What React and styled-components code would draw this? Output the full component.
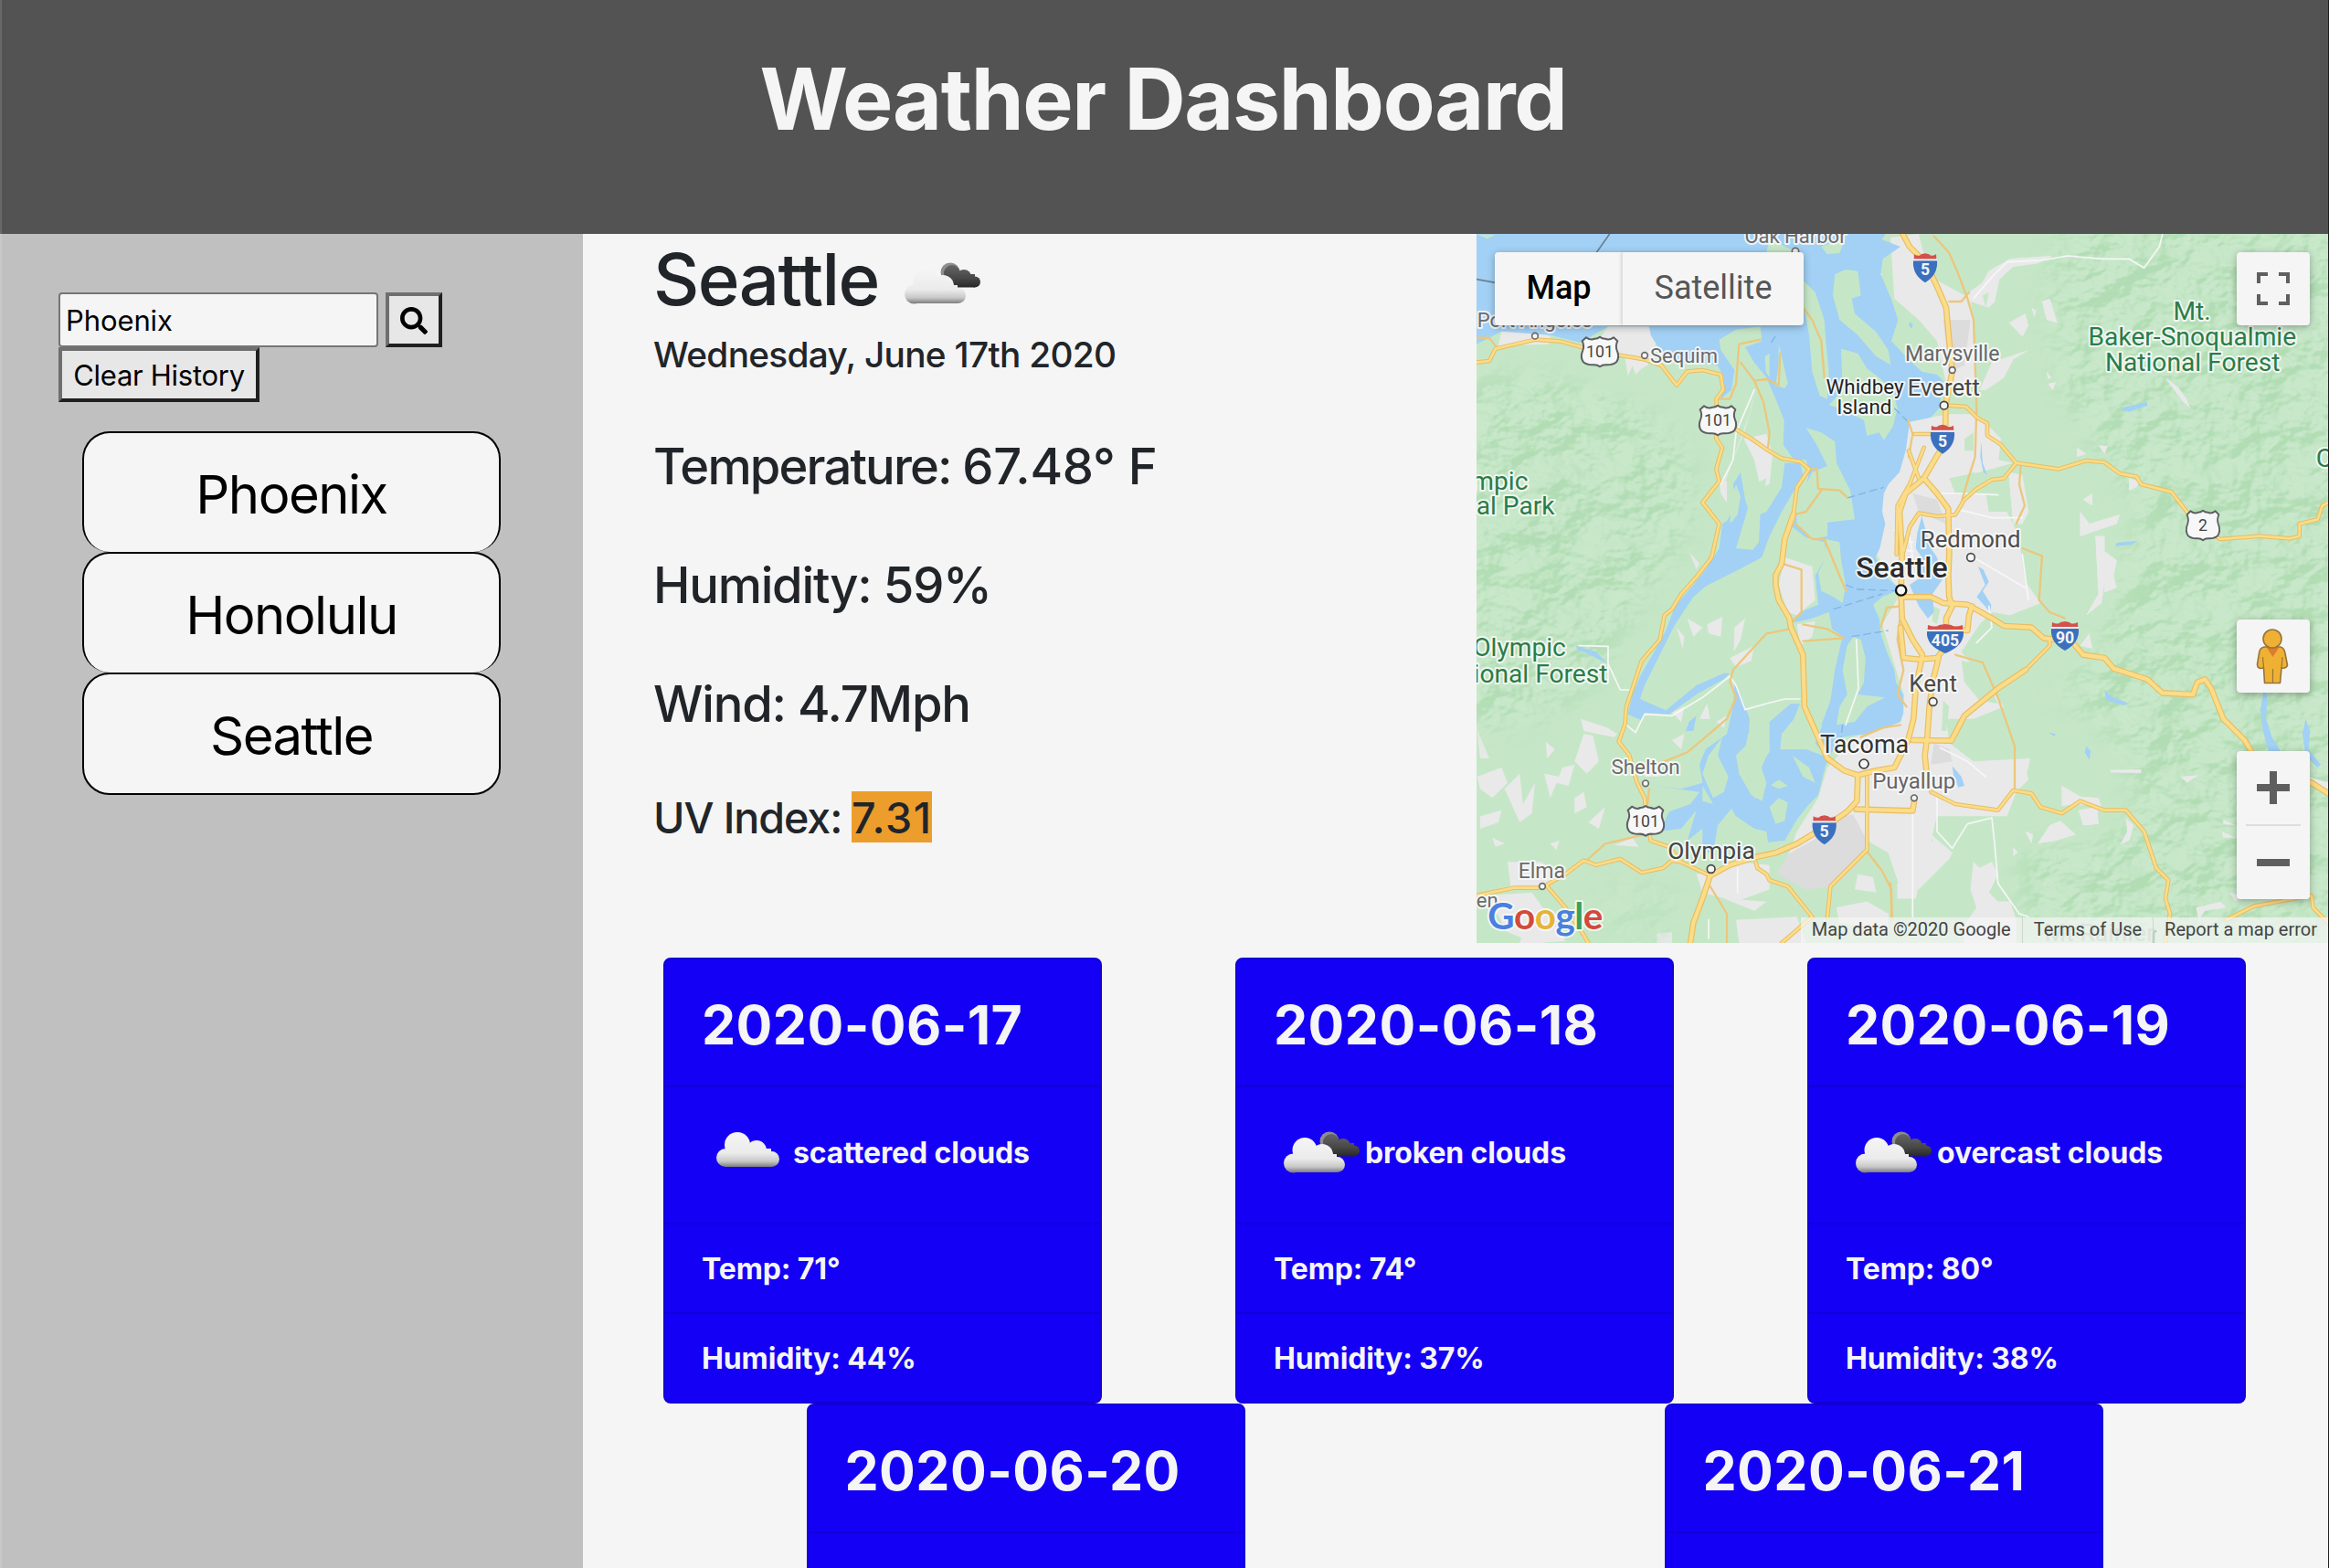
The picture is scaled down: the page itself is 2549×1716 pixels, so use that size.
import React from 'react';
import styled, { createGlobalStyle, css } from 'styled-components';
import { FaSearch } from 'react-icons/fa';

const sans = 'Inter, "Noto Sans", sans-serif';
const roboto = 'Roboto, "Noto Sans", sans-serif';
const paper = '#f5f5f5';

const GlobalStyle = createGlobalStyle`
  *, *::before, *::after { box-sizing: border-box; }
  html, body { margin: 0; }
  body { font-family: ${sans}; background: ${paper}; color: #212529; overflow: hidden; }
  h1, h2, h3, p, ul { margin: 0; padding: 0; font-weight: inherit; }
`;

const Page = styled.div`
  width: 2549px;
  height: 1716px;
  overflow: hidden;
  display: flex;
  flex-direction: column;
  border-right: 1px solid #1d1d1d;
`;

const Header = styled.header`
  height: 256px;
  flex: none;
  padding: 51px 4px 0 0;
  text-align: center;
  background: #535353;
  border-left: 2px solid #686868;
`;

const Title = styled.h1`
  color: ${paper};
  font-size: 93px;
  line-height: 115px;
  font-weight: 700;
  letter-spacing: -0.0143em;
`;

const Body = styled.div`
  flex: 1;
  min-height: 0;
  display: flex;
`;

const Sidebar = styled.aside`
  width: 638px;
  flex: none;
  padding: 64px 62px 0;
  background: #c0c0c0;
  border-left: 2px solid #c8c8c8;
  color: #000;
`;

const SearchRow = styled.div`
  display: flex;
  gap: 8px;
`;

const SearchInput = styled.input`
  width: 350px;
  height: 60px;
  padding: 1px 5px 0 6px;
  border: 2px solid #757575;
  border-radius: 4px;
  background: ${paper};
  color: #000;
  font: 430 31px ${sans};
  letter-spacing: -0.0033em;
  outline: none;
`;

const RaisedButton = styled.button`
  display: flex;
  align-items: center;
  justify-content: center;
  width: ${(p) => p.$width}px;
  height: 60px;
  padding: 1px 0 0;
  border: 4px solid;
  border-color: #6f6f6f #202020 #202020 #6f6f6f;
  background: #e7e7e7;
  color: #000;
  font: 430 31px ${sans};
  letter-spacing: -0.009em;
`;

const History = styled.ul`
  width: 458px;
  margin: 32px 0 0 26px;
  list-style: none;
`;

const HistoryItem = styled.li`
  height: 132px;
  padding-top: 4px;
  border: 2px solid #000;
  border-bottom-width: 0;
  border-radius: 30px;
  background: ${paper};
  text-align: center;
  font-size: 58px;
  font-weight: 440;
  line-height: 127px;
  letter-spacing: -0.026em;
  &:last-child { height: 134px; border-bottom-width: 2px; }
`;

const Main = styled.main`
  flex: 1;
  min-width: 0;
`;

const Current = styled.section`
  display: flex;
  justify-content: space-between;
  height: 776px;
`;

const Readings = styled.div`
  padding: 2px 0 0 77px;
  white-space: nowrap;
  font-weight: 550;
`;

const City = styled.h2`
  display: flex;
  font-size: 78px;
  line-height: 96px;
  font-weight: 550;
  letter-spacing: -0.02em;
  & > svg { margin: 26px 0 0 17px; }
`;

const DateLine = styled.p`
  margin-top: 10px;
  font-size: 38.8px;
  line-height: 48px;
  letter-spacing: -0.018em;
`;

const Reading = styled.p`
  margin-top: ${(p) => (p.$first ? 64 : 62)}px;
  font-size: 54.3px;
  line-height: 68px;
  letter-spacing: ${(p) => (p.$first ? -0.034 : -0.0225)}em;
`;

const Degrees = styled.span`
  letter-spacing: -0.005em;
`;

const UvLine = styled.p`
  display: flex;
  margin-top: 62px;
  height: 56px;
  padding-top: 1px;
  font-size: 46.6px;
  line-height: 56px;
  letter-spacing: -0.023em;
`;

const UvLabel = styled.span`
  width: 202px;
`;

const UvBadge = styled.span`
  width: 88px;
  height: 56px;
  margin: -1px 0 0 15px;
  padding-top: 1px;
  background: #ed9d2b;
  letter-spacing: 0.034em;
`;

const Forecast = styled.section`
  display: flex;
  flex-wrap: wrap;
  justify-content: space-around;
  align-items: flex-start;
  padding: 16px 17px 0 15px;
`;

const Card = styled.article`
  width: 480px;
  height: 488px;
  border: 2px solid #1200d8;
  border-radius: 8px;
  background: #1400f5;
  color: ${paper};
  font-weight: 700;
  font-size: 32px;
  letter-spacing: -0.004em;
`;

const CardRow = styled.div`
  display: flex;
  align-items: center;
  height: ${(p) => p.$height}px;
  padding: 1px 0 0 40px;
  white-space: nowrap;
  border-bottom: 2px solid #1200da;
  &:last-child { border-bottom: 0; }
`;

const CardDate = styled.h3`
  padding-top: 3px;
  font-size: 59px;
  font-weight: 700;
  letter-spacing: 0.0075em;
`;

const Sky = styled.span`
  margin: -6px 0 0 0;
`;

/* ---------- weather icons ---------- */

const CloudSvg = styled.svg`
  width: 100px;
  height: 60px;
  flex: none;
`;

function CloudDefs() {
  return (
    <defs>
      <linearGradient id="cloudFront" gradientUnits="userSpaceOnUse" x1="0" y1="4" x2="0" y2="48">
        <stop offset="0" stopColor="#f8f8f8" />
        <stop offset=".66" stopColor="#ebebeb" />
        <stop offset=".86" stopColor="#c8c8c8" />
        <stop offset="1" stopColor="#7e7e7e" />
      </linearGradient>
      <linearGradient id="cloudBack" gradientUnits="userSpaceOnUse" x1="0" y1="4" x2="0" y2="32">
        <stop offset="0" stopColor="#6a6a6a" />
        <stop offset=".6" stopColor="#474747" />
        <stop offset="1" stopColor="#222" />
      </linearGradient>
      <filter id="cloudSoft" x="-10%" y="-10%" width="120%" height="120%">
        <feGaussianBlur stdDeviation=".7" />
      </filter>
    </defs>
  );
}

function FewClouds() {
  return (
    <CloudSvg viewBox="0 0 100 60">
      <CloudDefs />
      <g transform="translate(5 -6)" fill="url(#cloudFront)" filter="url(#cloudSoft)">
        <circle cx="21" cy="38" r="10" />
        <circle cx="34" cy="24" r="14" />
        <circle cx="55" cy="30" r="11" />
        <circle cx="71.5" cy="39.5" r="8.5" />
        <rect x="21" y="28" width="50" height="20" />
      </g>
    </CloudSvg>
  );
}

function ManyClouds() {
  return (
    <CloudSvg viewBox="0 0 100 60">
      <CloudDefs />
      <g filter="url(#cloudSoft)">
        <circle cx="61" cy="14" r="10.5" fill="#8e8e8e" />
        <g fill="url(#cloudBack)">
          <circle cx="63" cy="15" r="9" />
          <circle cx="76" cy="19" r="8" />
          <circle cx="88" cy="24.5" r="6" />
          <rect x="60" y="16" width="28" height="14.5" />
        </g>
        <g fill="url(#cloudFront)">
          <circle cx="21.5" cy="38" r="10.5" />
          <circle cx="34" cy="23.5" r="13.5" />
          <circle cx="53" cy="29" r="12" />
          <circle cx="69.5" cy="39.5" r="8.5" />
          <rect x="21" y="28" width="48" height="20" />
        </g>
      </g>
    </CloudSvg>
  );
}

/* ---------- map ---------- */

const MapFrame = styled.div`
  position: relative;
  width: 932px;
  height: 776px;
  overflow: hidden;
  font-family: ${roboto};
`;

const MapSvg = styled.svg`
  display: block;
  width: 932px;
  height: 776px;
  font-family: ${roboto};
`;

const controlBox = css`
  position: absolute;
  background: ${paper};
  border-radius: 4px;
  box-shadow: 0 2px 8px rgba(0, 0, 0, 0.3);
`;

const MapTypes = styled.div`
  ${controlBox}
  left: 20px;
  top: 20px;
  display: flex;
  height: 80px;
  font-size: 36px;
  line-height: 79px;
  text-align: center;
`;

const MapType = styled.div`
  width: ${(p) => p.$width}px;
  color: ${(p) => (p.$active ? '#000' : '#565656')};
  font-weight: ${(p) => (p.$active ? 550 : 400)};
  box-shadow: ${(p) => (p.$active ? 'none' : '-2px 0 3px rgba(0,0,0,.12)')};
`;

const Control = styled.div`
  ${controlBox}
  right: 20px;
  top: ${(p) => p.$top}px;
  width: 80px;
  height: ${(p) => p.$height || 80}px;
  & > svg { display: block; }
`;

const Attribution = styled.div`
  position: absolute;
  right: 0;
  bottom: 0;
  display: flex;
  height: 28px;
  font-size: 20px;
  line-height: 27px;
  color: #444;
  white-space: nowrap;
`;

const Credit = styled.span`
  padding: 0 12px;
  background: rgba(245, 245, 245, 0.7);
  border-left: ${(p) => (p.$rule ? '1px solid rgba(200,200,200,.7)' : '0')};
`;

const WATER = '#a2d1f5';
const LAND = '#c6e7c7';
const TOWN = '#e9e9ea';

const seaways = [
  // strait and main sound
  '48,48 1392,48 1378,66 1440,90 1382,130 1375,180 1410,262 1432,330 1410,400 1467,460 1510,500 1560,510 1580,530 1567,620 1540,650 1470,665 1457,760 1437,830 1400,870 1385,900 1380,960 1390,1000 1372,1080 1358,1110 1400,1180 1440,1215 1380,1240 1350,1265 1370,1310 1375,1360 1395,1420 1420,1480 1425,1520 1450,1560 1450,1620 1440,1650 1340,1690 1250,1695 1180,1660 1210,1580 1225,1480 1250,1370 1215,1345 1205,1290 1150,1310 1085,1325 1110,1290 1170,1265 1160,1170 1195,1110 1190,1060 1130,1045 1085,1010 1105,960 1130,880 1140,830 1130,790 1090,790 1055,740 1058,660 1030,590 1000,520 960,470 930,420 985,400 980,352 900,362 845,395 850,430 895,495 885,560 850,590 860,520 840,480 760,470 700,470 650,430 620,380 615,352 480,352 390,405 290,380 130,368 48,410',
  // Hood Canal
  '1110,800 1060,800 1050,880 1000,960 950,980 930,920 915,830 890,870 905,930 870,990 855,1000 845,1080 820,1120 800,1150 760,1200 700,1270 670,1350 620,1440 590,1490 560,1560 545,1625 590,1645 600,1620 680,1625 770,1560 860,1510 880,1490 860,1490 770,1530 670,1612 585,1575 600,1530 640,1450 700,1330 760,1240 800,1205 850,1180 910,1150 985,1110 1010,1040 1050,960 1085,900 1120,840',
  // southern inlets
  '1110,1590 1080,1590 1010,1650 1010,1750 980,1790 1000,1850 985,1910 950,1890 910,1820 900,1760 940,1720 945,1640 915,1560 895,1530 890,1600 870,1690 800,1740 780,1790 790,1850 720,1870 630,1860 780,1880 750,1920 680,1945 650,2010 720,2000 770,1940 740,2040 790,2000 790,2080 825,2080 840,1990 885,1935 900,1960 960,2000 1000,2010 1005,2045 1060,2040 1100,1970 1140,1920 1170,1890 1195,1790 1210,1770 1130,1740 1045,1740 1050,1690 1090,1640',
  // Narrows
  '1250,1370 1225,1480 1210,1600 1180,1670 1160,1720 1200,1770 1250,1700 1340,1685 1440,1640 1440,1560 1340,1400',
];

const lakes = [
  '1510,975 1495,1030 1490,1080 1510,1110 1500,1180 1470,1200 1500,1270 1530,1310 1550,1290 1545,1230 1580,1180 1560,1110 1540,1080 1525,1030',
  '1695,1140 1718,1200 1690,1240 1735,1290 1738,1265 1710,1220 1730,1190 1712,1150',
  '2160,620 2250,600 2250,612 2190,632',
  '2150,1062 2220,1055 2200,1068 2145,1074',
  '2110,1545 2130,1565 2190,1590 2170,1595 2115,1578',
  '2050,1730 2065,1745 2060,1775 2045,1750',
  '1925,1685 1950,1690 1945,1698',
  '2632,1550 2645,1560 2640,1640 2660,1700 2690,1750 2650,1750 2630,1680 2622,1610',
  '2770,1640 2785,1680 2780,1740 2820,1790 2810,1800 2770,1760 2760,1690',
  '1610,1795 1640,1830 1650,1860 1630,1865 1615,1830',
  '1705,730 1710,800 1725,840 1712,830 1702,780',
  '375,1400 440,1420 480,1460 440,1440 400,1420 380,1415',
  '770,1630 760,1680 735,1680 745,1650',
  '1470,335 1480,345 1478,360 1468,350',
];

const islands = [
  // Whidbey
  '1010,60 1060,90 1110,110 1120,200 1160,240 1190,330 1195,400 1205,500 1200,590 1175,580 1150,500 1140,380 1125,300 1060,200 1000,110',
  '1245,425 1300,440 1330,490 1370,520 1415,560 1430,620 1415,680 1385,725 1370,700 1330,710 1320,660 1240,620 1205,610 1250,560',
  // Camano
  '1260,165 1300,170 1310,250 1280,260 1290,310 1360,370 1400,430 1408,478 1360,450 1300,380 1240,330 1218,250 1225,180',
  '1180,90 1260,60 1240,110 1200,115',
  '50,50 110,50 85,64',
  // Marrowstone, Indian Island
  '995,450 1010,440 1010,520 998,500', '1040,410 1048,440 1070,540 1060,555 1030,545 1040,480',
  // north Kitsap
  '1130,685 1180,700 1225,730 1230,800 1275,890 1290,985 1200,995 1200,1040 1150,1050 1100,1000 1100,930 1150,830 1200,810 1165,740',
  // Bainbridge
  '1195,1050 1240,1060 1245,1120 1260,1200 1250,1260 1220,1240 1180,1220 1170,1160 1190,1120',
  // Vashon
  '1285,1370 1310,1380 1325,1440 1320,1520 1300,1560 1390,1570 1330,1600 1290,1650 1230,1660 1240,1600 1265,1560 1250,1480 1265,1400',
  // south sound
  '855,1700 840,1760 875,1830 860,1880 825,1900 790,1820 810,1760',
  '1010,1740 985,1600 940,1690 925,1760 920,1810 960,1900 990,1900 975,1820',
  '1040,1900 1070,1915 1060,1975 1030,1985 1010,1930', '1040,1840 1070,1860 1040,1870 1015,1858',
  '1085,1760 1140,1800 1160,1850 1120,1830',
  '790,1860 825,1920 790,1910',
  '900,870 915,910 905,970 880,1000 885,920',
  '960,870 1000,850 980,960 975,1060 955,1085 900,1080 930,980',
];

const towns = [
  '1540,650 1600,640 1690,640 1770,720 1762,790 1810,800 1700,830 1600,850 1620,900 1760,905 1810,1000 1830,1060 1850,1190 1900,1260 1800,1300 1740,1290 1700,1330 1640,1420 1780,1600 1680,1640 1590,1640 1600,1720 1680,1780 1866,1770 1855,1820 1860,1840 1820,1880 1790,1960 1560,1960 1540,2040 1600,2100 1500,2200 1440,2200 1400,2080 1330,2040 1250,2030 1160,2160 1060,2120 1100,2010 1170,1900 1200,1800 1290,1700 1440,1650 1450,1560 1380,1330 1440,1230 1362,1100 1385,900 1457,760 1470,665',
  '1407,60 1500,48 1520,130 1560,200 1650,250 1720,200 1766,190 1750,270 1730,290 1670,270 1680,330 1690,550 1590,540 1560,400 1500,330 1420,260',
  '480,352 612,350 640,400 610,480 590,490 570,510 560,480 545,515 535,450 450,395',
  '130,368 240,360 290,385 285,410 120,415',
  '1005,60 1100,80 1120,180 1060,140', '1290,135 1310,160 1380,180 1370,195 1290,170',
  '970,540 950,620 930,690 890,790 850,900 860,860 900,760 940,650',
  '925,720 1000,705 1020,770 1010,870 980,880 960,790',
  '1060,1110 1150,1140 1160,1250 1100,1300 1070,1290 1040,1200',
  '1100,1330 1160,1320 1150,1370 1110,1400',
  '845,860 870,860 870,930 850,900', '745,1090 780,1130 770,1150',
  '740,1310 790,1340 760,1370', '805,1330 855,1305 850,1370 810,1360', '895,1340 930,1310 915,1380 893,1420',
  '705,1340 730,1370 725,1410', '880,1440 960,1400 950,1450 900,1470',
  '48,1670 90,1770 60,1770', '275,1715 305,1740 280,1770', '400,1690 430,1695 450,1780 410,1820 370,1780',
  '390,1640 420,1650 480,1670 510,1690 500,1700 400,1680',
  '50,1830 130,1800 150,1850 100,1900 60,1870', '140,1870 190,1820 200,1920 240,1850 230,1950 190,1980',
  '270,1820 320,1830 290,1900', '330,1800 370,1790 350,1860 310,1850', '370,1900 400,1880 410,1930 370,1950',
  '415,1980 470,1930 450,2000', '60,1960 130,1940 120,1980 60,2000', '100,2030 140,2050 110,2060',
  '150,2110 260,2110 320,2150 260,2200 160,2190', '290,2050 320,2040 310,2070',
  '80,2220 230,2210 280,2280 340,2370 240,2376 150,2340', '500,2055 560,2030 580,2060',
  '590,1790 660,1790 650,1830 600,1830', '200,2340 240,2320 270,2376 190,2376',
  '770,2150 900,2110 1010,2120 1010,2200 900,2240 790,2210', '860,2230 1000,2240 960,2270', '640,2345 690,2340 690,2376 640,2376',
  '900,2300 1100,2290 1130,2376 910,2376', '690,1620 730,1600 720,1650', '780,1640 805,1590 815,1640', '690,1710 730,1690 720,1740', '835,1650 870,1630 860,1670',
  '1300,2150 1350,2160 1360,2210 1290,2200', '1230,2260 1330,2240 1400,2280 1400,2330 1240,2310',
  '1680,260 1730,170 1800,130 1940,120 1890,145 1810,155 1740,220',
  '1797,340 1850,310 1860,350 1840,385', '1905,270 1930,260 1955,340 1920,330', '1870,290 1885,300 1880,320',
  '1700,560 1740,470 1860,430 1810,460 1780,520 1720,560', '1920,500 1935,520 1925,525', '1925,540 1950,535 1940,560',
  '2310,520 2350,550 2380,590 2392,622 2366,596 2330,550', '2020,750 2050,770 2020,780', '2090,742 2120,745 2110,770',
  '2190,850 2225,860 2215,880 2190,890', '2040,920 2070,900 2070,940', '2030,960 2060,1000 2160,970 2150,1000 2030,1040',
  '1795,830 1840,840 1860,960 1840,1000 1810,1000', '2080,1040 2110,1040 2110,1090 2150,1120 2140,1170 2110,1190 2100,1260 2050,1300 2090,1230',
  '2110,1180 2140,1170 2150,1210 2110,1225', '2030,1400 2060,1360 2070,1410',
  '1970,1860 2030,1895 2090,1900 2100,1930 2020,1920 1970,1925', '2025,1940 2085,1930 2090,1985 2040,1990',
  '1890,2050 1930,1990 1965,1975 2015,2020 1950,2040', '1850,2010 1875,2020 1870,2050', '2180,1965 2205,1990 2192,2040 2162,2052 2185,2010',
  '2130,1808 2230,1806 2230,1818 2130,1816', '2360,1830 2420,1825 2380,1850', '2500,1970 2540,1990 2500,1985', '2495,2010 2540,2030 2500,2030',
  '1680,2110 1700,2130 1740,2110 1760,2150 1730,2210 1760,2240 1800,2240 1820,2300 1820,2376 1650,2376 1640,2330 1690,2260 1670,2200',
  '1540,2020 1610,2080 1600,2100 1550,2060', '1430,2180 1500,2180 1490,2230 1430,2230', '1810,2060 1825,2080 1810,2090', '2410,2260 2490,2240 2510,2260 2440,2270 2420,2300',
  '2520,2210 2560,2220 2540,2240', '2750,1820 2844,1850 2844,1870 2740,1840',
];

const base = [
  '1180,1965 1285,1955 1330,2040 1305,2110 1225,2190 1130,2200 1035,2150 1070,2085 1160,2035',
  '1550,1720 1600,1740 1610,1780 1540,1790', '1430,600 1440,605 1430,610',
  '1580,330 1670,330 1650,480 1600,500', '1480,900 1560,920 1590,1000 1500,960',
];

const groves = [
  '1610,860 1680,830 1720,860 1660,890 1610,880', '1720,900 1770,870 1790,960 1730,960',
  '1600,1680 1640,1650 1700,1680 1760,1750 1730,1760 1660,1710', '1640,1450 1700,1460 1760,1590 1700,1580 1650,1520',
  '1580,1580 1600,1600 1590,1680 1575,1680', '1830,1590 1850,1600 1800,1610', '1545,1270 1570,1280 1560,1330 1545,1320',
  '1710,250 1730,240 1720,290', '1590,1970 1700,1960 1740,1980 1650,2040 1600,2070 1560,2000', '1650,720 1680,700 1680,760 1650,760',
];

const highways = [
  'M48 470 90 465 110 425 240 395 320 400 450 435 600 460 655 480 705 545 740 500 790 495 850 510 858 560 835 590 840 660 835 720 855 750 835 820 845 860 790 930 845 1000 820 1110 770 1175 720 1230 690 1280 665 1300 650 1380 590 1450 560 1540 540 1600 535 1660 515 1715 550 1760 560 1800 575 1850 600 1900 605 1960 620 2040 680 2060 720 2110 815 2155',
  'M900 690 950 720 1000 755 1050 785 1110 795 1140 820 1100 880 1088 970',
  'M1583 610 1655 615 1690 650 1725 670 1725 710 1770 740 1820 800 1960 820 2050 792 2110 798 2160 835 2215 845 2230 870 2330 895 2380 960 2430 1010 2490 1050 2620 1040 2720 1048 2750 1040 2750 1000 2810 985 2825 940 2844 930',
  'M1820 800 1780 850 1740 855 1690 885 1650 920 1620 970 1560 975 1500 965 1470 1010 1450 1090',
  'M1540 1880 1620 1920 1760 1940 1810 1875 1870 1885 1900 1930 1970 1950 2030 1910 2110 1940 2180 1940 2240 2010 2280 2130 2320 2170 2310 2230 2325 2280 2310 2376',
  'M48 2220 170 2195 260 2195 340 2150 400 2105 440 2120 520 2100 590 2145 660 2130 690 2105 720 2110',
  'M280 2190 340 2260 400 2350 415 2376',
  'M965 2110 970 2130 1000 2150 1010 2170 1070 2190 1150 2290 1050 2376',
  'M1330 1830 1330 2070 1210 2190 1200 2290',
  'M2510 2300 2600 2255 2790 2220 2795 2260 2844 2310',
  'M1850 1480 1930 1400 1930 1375',
  'M1467 760 1500 850 M1517 750 1470 870 1430 940 1427 1100',
  'M1487 705 1567 705',
];

const freeways = [
  'M1447 48 1470 90 1520 140 1560 220 1590 290 1600 400 1610 500 1588 610 1588 690 1570 760 1517 850 1457 900 1437 960 1445 1090 1442 1230 1445 1310 1480 1380 1512 1430 1490 1540 1483 1640 1465 1710 1440 1760 1420 1800 1360 1810 1300 1825 1297 1910 1265 1945 1200 1990 1100 2050 1030 2080 960 2095 880 2120 815 2155 790 2230 760 2310 750 2376',
  'M1517 850 1560 900 1597 950 1600 1100 1597 1170 1600 1240 1610 1270 1590 1310 1590 1400 1560 1440 1500 1445 1450 1440 1440 1340',
  'M1565 1440 1545 1520 1535 1600 1528 1700 1520 1760 1530 1860',
  'M1480 1710 1607 1712 1650 1630 1760 1540 1850 1480',
  'M1295 1937 1480 1942 1485 1910',
  'M1600 1345 1660 1350 1665 1300 1675 1270',
  'M1442 1240 1540 1240 1580 1260 1660 1265 1740 1310 1780 1335 1870 1340 1910 1375 1950 1380 1980 1360 2040 1430 2110 1440 2140 1475 2250 1510 2300 1555 2400 1560 2415 1520 2440 1510 2460 1540 2500 1640 2570 1710 2600 1760 2700 1810 2790 1850 2844 1885',
  'M1088 970 1060 1050 1050 1130 1030 1170 1030 1200 1040 1250 1075 1310 1080 1340 1120 1430 1125 1600 1165 1690 1200 1770 1255 1810 1300 1825',
];

const byways = [
  'M48 388 90 390 112 418', 'M915 470 960 530 990 600 1010 700 1005 750', 'M835 590 880 590 900 540 910 410 980 395',
  'M960 530 1000 525 1040 545 1045 440', 'M1120 290 1150 330 1180 400 1190 520', 'M1140 820 1165 820 1170 885 1240 890 1262 910',
  'M1090 970 1130 960 1180 890', 'M1095 1000 1150 1050 1190 1050 1240 1170 1262 1220', 'M1050 1130 1115 1150 1115 1290 1075 1330',
  'M1120 1330 1200 1345 1252 1375 1120 1385', 'M1075 1345 1000 1360 890 1480 880 1520 900 1570 870 1640 800 1700 740 1750 640 1790',
  'M1550 55 1600 110 1630 180 1660 260 1680 330 1690 620 1685 780 1660 860 1640 930', 'M1600 270 1640 270 1665 240',
  'M1835 810 1830 870 1848 940 1820 1000', 'M1840 1080 1905 1105 1895 1250 1930 1290 1980 1310',
  'M1620 1430 1710 1455 1760 1570 1815 1730 1815 1870', 'M415 2100 470 2050 600 2020', 'M1330 2075 1380 2140 1410 2200 1412 2300',
  'M815 2190 870 2280 870 2376', 'M1465 660 1480 705 1467 780', 'M1375 1340 1395 1275 1440 1270', 'M1310 1700 1380 1670 1440 1660', 'M605 1955 615 1870',
  'M1440 1300 1430 1380 1450 1480 1430 1560 1460 1600', 'M1407 2180 1412 2290',
];

const lanes = [
  'M1680 260 1740 190 1790 140 1900 135 1990 120 2100 130 2190 130 2240 160 2290 90 2300 50', 'M960 560 900 700 890 790 850 870',
  'M48 2220 100 2210', 'M480 1460 520 1545 560 1545', 'M540 1660 570 1685 600 1625 690 1630 790 1570 880 1500 900 1530 930 1610 1000 1590 1060 1575 1110 1575',
  'M1570 1735 1660 1780 1720 1830', 'M1560 1890 1560 2010 1610 2065 1660 1985 1740 1965 1750 2060 1760 2180 1830 2280 1860 2290',
  'M1640 955 1740 980 1840 980', 'M1680 1110 1850 1210 M1560 900 1660 900 1760 905', 'M1840 1100 1860 1250', 'M1730 1270 1740 1340 1690 1390',
  'M385 1400 480 1402 480 1520', 'M1295 1380 1302 1540 1260 1660', 'M1480 1900 1480 2290', 'M1420 1020 1470 1040 1480 1110 M1420 1050 1480 1060 M1420 1080 1480 1090',
  'M905 2130 905 2210 M810 2300 810 2360',
];

const ferries = 'M1015 405 1035 375 M1265 915 1385 880 M1260 1200 1300 1215 1440 1220 M1220 1280 1380 1230 M1280 1370 1400 1350 M1250 1660 1245 1700 M1420 620 1450 650 1470 670';

const cities = [
  // x, y and radius of the dot, label, label x, label baseline, size, colour
  [1095, 105, 11, 'Oak Harbor', 1095, 78, 66, '#6b6b6b'],
  [240, 383, 10, 'Port Angeles', 239, 355, 66, '#6b6b6b'],
  [600, 447, 10, 'Sequim', 729, 471, 66, '#6b6b6b'],
  [1610, 495, 10, 'Marysville', 1610, 466, 69, '#666'],
  [1583, 611, 13, 'Everett', 1582, 578, 77, '#444'],
  [1671, 1110, 13, 'Redmond', 1670, 1076, 77, '#4c4c4c'],
  [1547, 1584, 13, 'Kent', 1547, 1550, 78, '#4a4a4a'],
  [1485, 1900, 10, 'Puyallup', 1484, 1870, 72, '#666'],
  [1320, 1788, 15, 'Tacoma', 1322, 1753, 81, '#333'],
  [603, 1852, 10, 'Shelton', 603, 1822, 67, '#6b6b6b'],
  [818, 2133, 13, 'Olympia', 819, 2100, 79, '#444'],
  [264, 2190, 10, 'Elma', 262, 2162, 69, '#6b6b6b'],
];

const parks = [
  ['mpic', 124, 887], ['al Park', 176, 970], ['Olympic', 189, 1435], ['ional Forest', 258, 1520],
  ['Mt.', 2397, 330], ['Baker-Snoqualmie', 2398, 413], ['National Forest', 2399, 497], ['C', 2832, 812],
];

const Label = styled.text`
  text-anchor: middle;
  paint-order: stroke;
  stroke: rgba(250, 250, 250, 0.85);
  stroke-width: 12px;
  stroke-linejoin: round;
`;

const Polys = ({ list, fill }) => list.map((points, i) => <polygon key={i} points={points} fill={fill} />);

const Roads = ({ list, stroke, width }) => (
  <g fill="none" stroke={stroke} strokeWidth={width} strokeLinejoin="round" strokeLinecap="round">
    {list.map((d, i) => <path key={i} d={d} />)}
  </g>
);

function UsShield({ x, y, label, w = 122 }) {
  return (
    <g transform={`translate(${x} ${y})`}>
      <path
        transform={`scale(${w / 122} 1)`}
        d="M-45 -47 Q-30 -36 -17 -43 Q-7 -43 0 -49 Q7 -43 17 -43 Q30 -36 45 -47 L58 -35 Q50 -20 56 -5 Q66 18 54 34 Q42 44 22 43 Q8 42 0 49 Q-8 42 -22 43 Q-42 44 -54 34 Q-66 18 -56 -5 Q-50 -20 -58 -35 Z"
        fill="#f7f7f7" stroke="#5c5f63" strokeWidth="6" strokeLinejoin="round"
      />
      <text y="19" textAnchor="middle" fontSize="53" fill="#444">{label}</text>
    </g>
  );
}

function Interstate({ x, y, label, w = 78 }) {
  const h = w / 2;
  return (
    <g transform={`translate(${x} ${y})`}>
      <path d={`M${-h + 3} -45 Q${-h / 2} -36 ${-h / 3} -45 L0 -48 L${h / 3} -45 Q${h / 2} -36 ${h - 3} -45 L${h - 2} -29 H${-h + 2} Z`} fill="#d3514d" />
      <path d={`M${-h} -24 H${h} Q${h + 4} 22 0 48 Q${-h - 4} 22 ${-h} -24 Z`} fill="#3b70bf" />
      <path d={`M${-h} -27 H${h}`} stroke="#f5f5f5" strokeWidth="5" />
      <text y="24" textAnchor="middle" fontSize="53" fontWeight="700" fill="#f5f5f5">{label}</text>
    </g>
  );
}

function RegionMap() {
  return (
    <MapSvg viewBox="48 48 2796 2328" preserveAspectRatio="none">
      <defs>
        <filter id="relief" x="0" y="0" width="100%" height="100%" colorInterpolationFilters="sRGB">
          <feTurbulence type="fractalNoise" baseFrequency=".0065 .0085" numOctaves="4" seed="11" />
          <feColorMatrix type="matrix" values="0 0 0 0 0  0 0 0 0 0  0 0 0 0 0  1.2 0 0 0 0" />
          <feDiffuseLighting surfaceScale="85" diffuseConstant="1.05" lightingColor="#fff">
            <feDistantLight azimuth="225" elevation="52" />
          </feDiffuseLighting>
        </filter>
        <filter id="soft"><feGaussianBlur stdDeviation="45" /></filter>
        <mask id="hills" maskUnits="userSpaceOnUse" x="48" y="48" width="2796" height="2328">
          <g fill="#fff" filter="url(#soft)">
            <polygon points="0,520 300,520 620,640 740,760 760,980 680,1150 560,1290 440,1520 300,1620 0,1700" />
            <polygon points="1990,0 2900,0 2900,2350 2400,2360 1840,2300 1830,2080 2100,2050 2230,1950 2150,1700 1950,1560 2100,1400 2160,1200 2230,950 2100,780 1960,560 1920,200" />
            <polygon points="440,2180 720,2160 700,2376 480,2376" opacity=".4" />
          </g>
        </mask>
      </defs>
      <rect x="48" y="48" width="2796" height="2328" fill={LAND} />
      <Polys list={towns} fill={TOWN} />
      <Polys list={base} fill="#dcdcdc" />
      <Polys list={groves} fill={LAND} />
      <g mask="url(#hills)">
        <rect x="48" y="48" width="2796" height="2328" fill="#c0e4c2" />
        <rect x="48" y="48" width="2796" height="2328" filter="url(#relief)" opacity=".3" style={{ mixBlendMode: 'soft-light' }} />
      </g>
      <Polys list={towns.slice(-34)} fill={TOWN} />
      <Polys list={seaways} fill={WATER} />
      <Polys list={islands} fill={LAND} />
      <Polys list={lakes} fill={WATER} />
      <path d="M485 48 440 112 M48 197 110 208" stroke="#6d7f90" strokeWidth="5" fill="none" />
      <path d={ferries} stroke="#82b4e4" strokeWidth="4" strokeDasharray="26 12" fill="none" />
      <Roads list={lanes} stroke="#f6f7f6" width={5} />
      <Roads list={byways} stroke="#ebc77d" width={7} />
      <Roads list={highways} stroke="#e8bd62" width={14} />
      <Roads list={freeways} stroke="#e8bd62" width={20} />
      <Roads list={highways} stroke="#fbdc88" width={8} />
      <Roads list={freeways} stroke="#fbdc88" width={13} />

      <UsShield x={453} y={435} label="101" />
      <UsShield x={840} y={660} label="101" />
      <UsShield x={603} y={1975} label="101" />
      <UsShield x={2433} y={1005} label="2" w={110} />
      <Interstate x={1521} y={160} label="5" />
      <Interstate x={1578} y={722} label="5" />
      <Interstate x={1190} y={2005} label="5" />
      <Interstate x={1587} y={1377} label="405" w={120} />
      <Interstate x={1980} y={1368} label="90" w={90} />

      {cities.map(([x, y, r, name, lx, ly, size, colour]) => (
        <g key={name}>
          <circle cx={x} cy={y} r={r} fill="#f5f5f5" stroke={colour} strokeWidth="5" />
          <Label x={lx} y={ly} fontSize={size} fill={colour}>{name}</Label>
        </g>
      ))}
      <circle cx="1442" cy="1218" r="17" fill="#f5f5f5" stroke="#111" strokeWidth="7" />
      <Label x="1444" y="1175" fontSize="96" fontWeight="500" fill="#2b2b2b">Seattle</Label>
      <Label x="1323" y="573" fontSize="67" fill="#222">Whidbey</Label>
      <Label x="1321" y="638" fontSize="67" fill="#222">Island</Label>
      <Label x="83" y="2258" fontSize="66" fill="#6b6b6b">en</Label>
      {parks.map(([name, x, y]) => (
        <Label key={name + y} x={x} y={y} fontSize="84.5" fill="#2a7d48">{name}</Label>
      ))}
      <text x="2094" y="2370" textAnchor="middle" fontSize="80" fill="#a0b8a4">Mt Rainier</text>
      <path d="M2271 2376V2345Q2271 2337 2281 2337" fill="none" stroke="#2a7d48" strokeWidth="8" />

      <Label x="273" y="2332" fontSize="121" fontFamily="Lato, sans-serif" fontWeight="700" letterSpacing="-1.5">
        <tspan fill="#4a80e0">G</tspan><tspan fill="#d24a3c">o</tspan><tspan fill="#e5b43a">o</tspan>
        <tspan fill="#4a80e0">g</tspan><tspan fill="#3ba158">l</tspan><tspan fill="#d24a3c">e</tspan>
      </Label>
    </MapSvg>
  );
}

function MapPanel() {
  return (
    <MapFrame>
      <RegionMap />
      <MapTypes>
        <MapType $width={140} $active>Map</MapType>
        <MapType $width={198}>Satellite</MapType>
      </MapTypes>
      <Control $top={20}>
        <svg width="80" height="80" fill="none" stroke="#5f5f5f" strokeWidth="4">
          <path d="M34 24H24V34M46 24H56V34M34 56H24V46M46 56H56V46" />
        </svg>
      </Control>
      <Control $top={422}>
        <svg width="80" height="80" stroke="#97743a" strokeWidth="1.6" strokeLinejoin="round">
          <path d="M30 30 Q25 31 24.500 37 L22.500 49 Q22.500 53 26 53.500 L29.500 53 30.500 69.500H47.500L49 53 Q54 54 55.500 50 L53 37 Q52 31 48 30Z" fill="#efb134" />
          <path d="M33 31H46L39.500 41Z" fill="#df7a2e" stroke="none" />
          <path d="M39.500 54V69M28.500 41 29.500 53M50 41 49 53" fill="none" strokeWidth="1.200" />
          <circle cx="39" cy="21" r="10" fill="#efb134" />
        </svg>
      </Control>
      <Control $top={566} $height={162}>
        <svg width="80" height="162" fill="#5f5f5f">
          <path d="M36 22h8v14h14v8H44v14h-8V44H22v-8h14zM22 118h36v8H22z" />
          <path d="M10 80h60v2H10z" fill="#dedede" />
        </svg>
      </Control>
      <Attribution>
        <Credit>Map data ©2020 Google</Credit>
        <Credit $rule>Terms of Use</Credit>
        <Credit $rule>Report a map error</Credit>
      </Attribution>
    </MapFrame>
  );
}

const history = ['Phoenix', 'Honolulu', 'Seattle'];

const days = [
  { date: '2020-06-17', sky: 'scattered clouds', icon: FewClouds, temp: 71, humidity: 44 },
  { date: '2020-06-18', sky: 'broken clouds', icon: ManyClouds, temp: 74, humidity: 37 },
  { date: '2020-06-19', sky: 'overcast clouds', icon: ManyClouds, temp: 80, humidity: 38 },
  { date: '2020-06-20' },
  { date: '2020-06-21' },
];

function DayCard({ date, sky, icon: Icon, temp, humidity }) {
  return (
    <Card>
      <CardRow $height={140}><CardDate>{date}</CardDate></CardRow>
      <CardRow $height={150}>{Icon && <Icon />}{sky && <Sky>{sky}</Sky>}</CardRow>
      <CardRow $height={98}>{temp && `Temp: ${temp}°`}</CardRow>
      <CardRow $height={96}>{humidity && `Humidity: ${humidity}%`}</CardRow>
    </Card>
  );
}

export default function App() {
  return (
    <Page>
      <GlobalStyle />
      <Header><Title>Weather Dashboard</Title></Header>
      <Body>
        <Sidebar>
          <SearchRow>
            <SearchInput defaultValue="Phoenix" />
            <RaisedButton $width={62} aria-label="Search"><FaSearch size={30} /></RaisedButton>
          </SearchRow>
          <RaisedButton $width={220}>Clear History</RaisedButton>
          <History>{history.map((name) => <HistoryItem key={name}>{name}</HistoryItem>)}</History>
        </Sidebar>
        <Main>
          <Current>
            <Readings>
              <City>Seattle<ManyClouds /></City>
              <DateLine>Wednesday, June 17th 2020</DateLine>
              <Reading $first>Temperature: <Degrees>67.48° F</Degrees></Reading>
              <Reading>Humidity: 59%</Reading>
              <Reading>Wind: 4.7Mph</Reading>
              <UvLine><UvLabel>UV Index:</UvLabel><UvBadge>7.31</UvBadge></UvLine>
            </Readings>
            <MapPanel />
          </Current>
          <Forecast>{days.map((day) => <DayCard key={day.date} {...day} />)}</Forecast>
        </Main>
      </Body>
    </Page>
  );
}
